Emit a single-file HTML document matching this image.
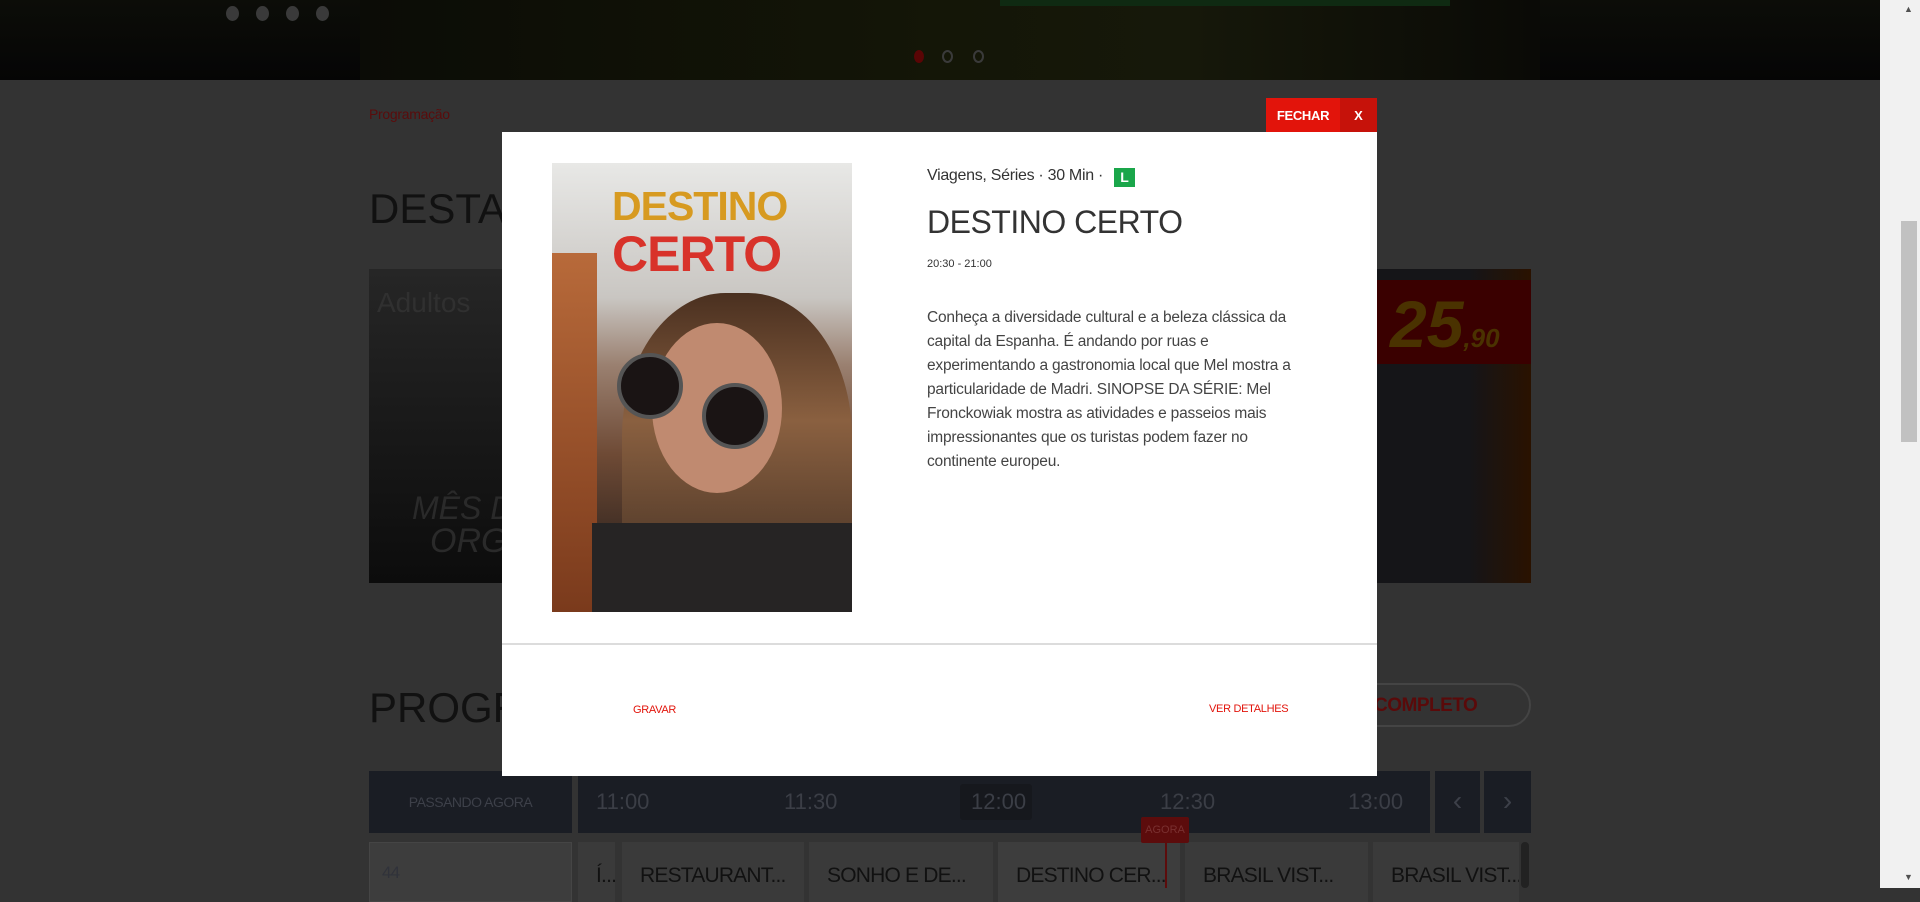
<!DOCTYPE html>
<html><head><meta charset="utf-8"><style>
*{margin:0;padding:0;box-sizing:border-box}
body{width:1920px;height:888px;overflow:hidden;background:#333;font-family:"Liberation Sans",sans-serif;position:relative}
.a{position:absolute}
.cell{position:absolute;top:842px;height:60px;background:#3a3a3a;color:#111;font-size:21px;padding:22px 0 0 18px;white-space:nowrap;overflow:hidden;letter-spacing:-0.8px}
.t{position:absolute;top:789px;color:#3b3e46;font-size:22px}
.dot{position:absolute;width:13px;height:15px;border-radius:50%;background:#3a3a3a;top:6px}
</style></head><body>
<div class="a" style="left:0;top:0;width:1880px;height:80px;background:linear-gradient(180deg,#0c0d08,#050505)"></div>
<div class="a" style="left:360px;top:0;width:1180px;height:80px;background:linear-gradient(90deg,#0b0c06,#141607 50%,#16180a 70%,#0a0a06)"></div>
<div class="a" style="left:1000px;top:0;width:450px;height:6px;background:#0f2a12"></div>
<div class="dot" style="left:226px"></div><div class="dot" style="left:256px"></div><div class="dot" style="left:286px"></div><div class="dot" style="left:316px"></div>
<div class="a" style="left:914px;top:50px;width:10px;height:13px;border-radius:50%;background:#5a0505"></div>
<div class="a" style="left:942px;top:50px;width:11px;height:13px;border-radius:50%;border:2px solid #3a3a3a"></div>
<div class="a" style="left:973px;top:50px;width:11px;height:13px;border-radius:50%;border:2px solid #3a3a3a"></div>
<div class="a" style="left:1880px;top:0;width:40px;height:888px;background:#f1f1f1"></div>
<div class="a" style="left:1901px;top:221px;width:16px;height:221px;background:#c1c1c1"></div>
<div class="a" style="left:1904px;top:4px;font-size:9px;color:#505050">▲</div>
<div class="a" style="left:1904px;top:872px;font-size:9px;color:#505050">▼</div>
<div class="a" style="left:369px;top:106px;font-size:14px;color:#5a0c0c;letter-spacing:-0.3px">Programação</div>
<div class="a" style="left:369px;top:185px;font-size:42px;color:#111">DESTAQUES</div>
<div class="a" style="left:369px;top:269px;width:1162px;height:314px;background:linear-gradient(180deg,#262626,#0c0c0c)"></div>
<div class="a" style="left:377px;top:287px;font-size:28px;color:#303030">Adultos</div>
<div class="a" style="left:412px;top:490px;font-size:32px;color:#2a2a2a;font-style:italic">MÊS DO</div>
<div class="a" style="left:430px;top:522px;font-size:34px;color:#2a2a2a;font-style:italic">ORG</div>
<div class="a" style="left:1377px;top:269px;width:154px;height:314px;background:linear-gradient(90deg,#151518 60%,#2a1200)"></div>
<div class="a" style="left:1377px;top:280px;width:154px;height:84px;background:#3a0000"></div>
<div class="a" style="left:1390px;top:286px;font-size:66px;font-weight:bold;font-style:italic;color:#4a3200">25<span style="font-size:26px">,90</span></div>
<div class="a" style="left:369px;top:684px;font-size:42px;color:#111">PROGRAMAÇÃO</div>
<div class="a" style="left:1330px;top:683px;width:201px;height:44px;border:2px solid #444;border-radius:22px;color:#5a0a0a;font-size:19px;font-weight:bold;padding:10px 0 0 42px;letter-spacing:-0.5px">COMPLETO</div>
<div class="a" style="left:369px;top:771px;width:203px;height:62px;background:#1a1d24;color:#3d4049;font-size:14px;text-align:center;padding-top:23px;letter-spacing:-0.5px">PASSANDO AGORA</div>
<div class="a" style="left:578px;top:771px;width:852px;height:62px;background:#1a1d24"></div>
<div class="a" style="left:960px;top:784px;width:72px;height:36px;background:#16181d;border-radius:3px"></div>
<div class="t" style="left:596px">11:00</div><div class="t" style="left:784px">11:30</div><div class="t" style="left:971px">12:00</div><div class="t" style="left:1160px">12:30</div><div class="t" style="left:1348px">13:00</div>
<div class="a" style="left:1435px;top:771px;width:45px;height:62px;background:#1a1d24;color:#3d4049;font-size:28px;text-align:center;padding-top:14px">‹</div>
<div class="a" style="left:1484px;top:771px;width:47px;height:62px;background:#1a1d24;color:#3d4049;font-size:28px;text-align:center;padding-top:14px">›</div>
<div class="cell" style="left:369px;width:203px;background:#3d3d3d;border:1px solid #454545;color:#30323a;padding:20px 0 0 12px;font-size:17px">44</div>
<div class="cell" style="left:578px;width:37px">Í...</div>
<div class="cell" style="left:622px;width:182px">RESTAURANT...</div>
<div class="cell" style="left:809px;width:184px">SONHO E DE...</div>
<div class="cell" style="left:998px;width:182px;background:#3d3d3d">DESTINO CER...</div>
<div class="cell" style="left:1185px;width:183px">BRASIL VIST...</div>
<div class="cell" style="left:1373px;width:146px">BRASIL VIST...</div>
<div class="a" style="left:1521px;top:842px;width:8px;height:46px;background:#222;border-radius:4px"></div>
<div class="a" style="left:1141px;top:817px;width:48px;height:26px;background:#5c0c0c;color:#7a3030;font-size:11px;text-align:center;padding-top:7px;border-radius:2px">AGORA</div>
<div class="a" style="left:1165px;top:843px;width:2px;height:45px;background:#5c0c0c"></div>
<div class="a" style="left:1266px;top:98px;width:74px;height:34px;background:#e2140b;color:#fff;font-size:13px;font-weight:bold;text-align:center;padding-top:10px;letter-spacing:-0.3px">FECHAR</div>
<div class="a" style="left:1340px;top:98px;width:37px;height:34px;background:#c6120a;color:#fff;font-size:13px;font-weight:bold;text-align:center;padding-top:10px">X</div>
<div class="a" style="left:502px;top:132px;width:875px;height:644px;background:#fff"></div>
<div class="a" style="left:552px;top:163px;width:300px;height:449px;overflow:hidden;background:linear-gradient(180deg,#e8e8e6 0%,#c9c6c2 30%,#9a8070 45%,#6e4a35 65%,#3a2a22 85%,#2a2626 100%)">
 <div class="a" style="left:0;top:90px;width:45px;height:359px;background:linear-gradient(180deg,#b86a3a,#7a3a1c)"></div>
 <div class="a" style="left:70px;top:130px;width:230px;height:320px;border-radius:45% 45% 0 0;background:linear-gradient(180deg,#4a3020,#8a6040 40%,#3a2a20)"></div>
 <div class="a" style="left:100px;top:160px;width:130px;height:170px;border-radius:50%;background:#c08a70"></div>
 <div class="a" style="left:65px;top:190px;width:66px;height:66px;border-radius:50%;background:#1a1414;border:4px solid #555"></div>
 <div class="a" style="left:150px;top:220px;width:66px;height:66px;border-radius:50%;background:#1a1414;border:4px solid #555"></div>
 <div class="a" style="left:40px;top:360px;width:260px;height:89px;background:#262424"></div>
 <div class="a" style="left:60px;top:20px;font-size:41px;font-weight:bold;color:#d79a20;letter-spacing:-1px">DESTINO</div>
 <div class="a" style="left:60px;top:62px;font-size:50px;font-weight:bold;color:#d8322a;letter-spacing:-1px">CERTO</div>
</div>
<div class="a" style="left:927px;top:167px;font-size:16px;color:#333;letter-spacing:-0.3px">Viagens, Séries · 30 Min ·</div>
<div class="a" style="left:1114px;top:168px;width:21px;height:19px;background:#1aa64a;color:#fff;font-size:14px;font-weight:bold;text-align:center;padding-top:1px">L</div>
<div class="a" style="left:927px;top:204px;font-size:32px;color:#333;letter-spacing:-0.5px">DESTINO CERTO</div>
<div class="a" style="left:927px;top:258px;font-size:11px;color:#333">20:30 - 21:00</div>
<div class="a" style="left:927px;top:306px;font-size:15.5px;line-height:24px;color:#444;letter-spacing:-0.2px">Conheça a diversidade cultural e a beleza clássica da<br>capital da Espanha. É andando por ruas e<br>experimentando a gastronomia local que Mel mostra a<br>particularidade de Madri. SINOPSE DA SÉRIE: Mel<br>Fronckowiak mostra as atividades e passeios mais<br>impressionantes que os turistas podem fazer no<br>continente europeu.</div>
<div class="a" style="left:502px;top:643px;width:875px;height:2px;background:#dcdcdc"></div>
<div class="a" style="left:633px;top:704px;font-size:11px;color:#e2140b;letter-spacing:-0.3px">GRAVAR</div>
<div class="a" style="left:1209px;top:703px;font-size:11px;color:#e2140b;letter-spacing:-0.3px">VER DETALHES</div>
</body></html>
